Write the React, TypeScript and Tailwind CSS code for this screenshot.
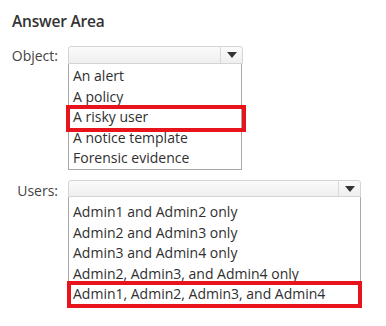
// Exam-style "Answer Area" with two open dropdown lists and the chosen
// answers boxed in red.

const objects = [
  "An alert",
  "A policy",
  "A risky user",
  "A notice template",
  "Forensic evidence",
];

const users = [
  "Admin1 and Admin2 only",
  "Admin2 and Admin3 only",
  "Admin3 and Admin4 only",
  "Admin2, Admin3, and Admin4 only",
  "Admin1, Admin2, Admin3, and Admin4",
];

function Caret() {
  return (
    <svg width="10" height="6" viewBox="0 0 10 6" aria-hidden>
      <path d="M0 0 L10 0 L5 6 Z" fill="#333333" />
    </svg>
  );
}

function SelectHead({ width, height }: { width: string; height: string }) {
  return (
    <div
      className={`flex ${width} ${height} rounded-t-[3px] border border-[#d4d4d4] bg-gradient-to-b from-[#fbfbfb] to-[#efefef]`}
    >
      <div className="flex-1" />
      <div className="flex w-[22px] items-center justify-center border-l border-[#d9d9d9]">
        <Caret />
      </div>
    </div>
  );
}

interface ListProps {
  items: string[];
  picked: number;
  width: string;
  pad: string;
  box: string;
}

function OpenList({ items, picked, width, pad, box }: ListProps) {
  return (
    <div className={`${width} ${pad} border-x border-b border-[#a8a8a8] bg-white`}>
      {items.map((it, i) => (
        <div
          key={it}
          className="relative flex h-[20.5px] items-center pl-[4px] pt-[2px] text-[14px] text-[#2f2f2f]"
        >
          <span className="leading-none">{it}</span>
          {i === picked && (
            <div className={`pointer-events-none absolute border-[4px] border-[#e8141c] ${box}`} />
          )}
        </div>
      ))}
    </div>
  );
}

export default function App() {
  return (
    <div
      className="h-[326px] w-[386px] overflow-hidden bg-white pt-[11px]"
      style={{ fontFamily: '"Open Sans", "Noto Sans", sans-serif' }}
    >
      <div className="pl-[12px] text-[15.5px] font-semibold leading-[20px] tracking-[-0.2px] text-[#333333]">
        Answer Area
      </div>

      <div className="mt-[15px] flex">
        <div className="flex h-[18px] w-[68px] items-center justify-end pr-[10px] text-[14px] text-[#444444]">
          Object:
        </div>
        <div className="flex flex-col">
          <SelectHead width="w-[175px]" height="h-[18px]" />
          <OpenList
            items={objects}
            picked={2}
            width="w-[174px]"
            pad="pt-[1px] pb-[1.5px]"
            box="-top-[1px] -bottom-[5px] -left-[3px] -right-[5px]"
          />
        </div>
      </div>

      <div className="mt-[10px] flex">
        <div className="flex h-[21px] w-[68px] items-end justify-end pr-[10px] text-[14px] text-[#444444]">
          Users:
        </div>
        <div className="flex flex-col">
          <SelectHead width="w-[293px]" height="h-[17px]" />
          <OpenList
            items={users}
            picked={4}
            width="w-[293px]"
            pad="pt-[4px]"
            box="-top-[2px] -bottom-[4px] -left-[2px] -right-[2px]"
          />
        </div>
      </div>
    </div>
  );
}
